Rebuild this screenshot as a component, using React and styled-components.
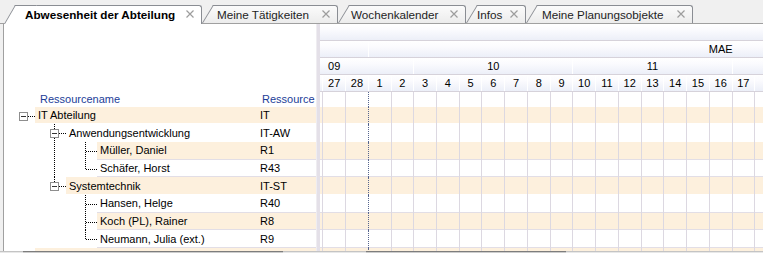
import React from 'react';
import styled, { createGlobalStyle } from 'styled-components';

const ROW_H = 17.667;
const COL = 22.737;

const Global = createGlobalStyle`
  html, body { margin: 0; padding: 0; background: #f0f0f0; }
  body {
    font-family: "Liberation Sans", Arial, sans-serif;
    font-size: 11px;
    color: #000;
    overflow: hidden;
  }
`;

const Window = styled.div`
  width: 763px;
  height: 253px;
  display: flex;
  flex-direction: column;
  background: #f0f0f0;
  overflow: hidden;
`;

/* ---------- Tabs ---------- */
const TabBar = styled.div`
  flex: 0 0 24px;
  box-sizing: border-box;
  display: flex;
  align-items: flex-end;
  padding-left: 4px;
  border-bottom: 1px solid #a0a0a0;
`;

const Tab = styled.div`
  position: relative;
  z-index: ${(p) => p.$z};
  flex: 0 0 auto;
  box-sizing: border-box;
  width: ${(p) => p.$w}px;
  height: ${(p) => (p.$active ? 19 : 18)}px;
  margin-left: 11px;
  margin-bottom: ${(p) => (p.$active ? -1 : 0)}px;
  display: flex;
  align-items: center;
  padding-bottom: ${(p) => (p.$active ? 2 : 1)}px;
  border-top: 1px solid #8a8d93;
  border-right: 1px solid #8a8d93;
  border-top-right-radius: 3px;
  background: ${(p) => (p.$active ? '#ffffff' : 'linear-gradient(#fbfbfb, #ececec)')};

  &::before {
    content: '';
    position: absolute;
    z-index: -1;
    top: -1px;
    bottom: 0;
    left: -11px;
    width: 22px;
    box-sizing: border-box;
    border-left: 1px solid #8a8d93;
    border-top: 1px solid #8a8d93;
    background: inherit;
    transform-origin: bottom left;
    transform: skewX(${(p) => (p.$active ? -30.1 : -31.4)}deg);
  }
`;

const TabLabel = styled.span`
  flex: 1 1 auto;
  padding-left: ${(p) => p.$pl}px;
  font-size: 11.7px;
  font-weight: ${(p) => (p.$active ? 700 : 400)};
  color: ${(p) => (p.$active ? '#000' : '#1e1e1e')};
  white-space: nowrap;
`;

const CloseIcon = styled.svg`
  flex: 0 0 auto;
  width: 8px;
  height: 8px;
  margin-right: 7px;
`;

function Close() {
  return (
    <CloseIcon viewBox="0 0 8 8">
      <path d="M0.5 0.5 L7.5 7.5 M7.5 0.5 L0.5 7.5" stroke="#9d9d9d" strokeWidth="1.2" />
    </CloseIcon>
  );
}

const tabs = [
  { label: 'Abwesenheit der Abteilung', w: 187, pl: 10, active: true },
  { label: 'Meine Tätigkeiten', w: 125, pl: 4 },
  { label: 'Wochenkalender', w: 117, pl: 2 },
  { label: 'Infos', w: 49, pl: 0 },
  { label: 'Meine Planungsobjekte', w: 156, pl: 5 },
];

/* ---------- Body ---------- */
const Body = styled.div`
  flex: 0 0 227px;
  display: flex;
  overflow: hidden;
`;

const OuterEdge = styled.div`
  flex: 0 0 3px;
  background: #f0f0f0;
`;

const LeftPanel = styled.div`
  flex: 0 0 313px;
  box-sizing: border-box;
  border-left: 1px solid #a0a0a0;
  background: #fff;
  display: flex;
  flex-direction: column;
`;

const HeaderSpace = styled.div`
  flex: 0 0 68px;
`;

const ColumnHeader = styled.div`
  flex: 0 0 14.667px;
  display: flex;
  align-items: center;
  padding-left: 36px;
  color: #1c3d98;
`;

const ColName = styled.span`
  flex: 1 1 auto;
`;

const ColCode = styled.span`
  flex: 0 0 58px;
  box-sizing: border-box;
  padding-left: 4px;
`;

const TreeRow = styled.div`
  flex: 0 0 ${ROW_H}px;
  display: flex;
`;

const Band = styled.div`
  flex: 1 1 auto;
  display: flex;
  align-items: center;
  padding-bottom: 1px;
  box-sizing: border-box;
  background: linear-gradient(
    to bottom,
    ${(p) => (p.$alt ? '#fdf0dd' : '#ffffff')} calc(100% - 1px),
    ${(p) => (p.$line ? '#e2dee6' : '#ffffff')} calc(100% - 1px)
  );
`;

const NameCell = styled.span`
  flex: 1 1 auto;
  padding-left: 3px;
  white-space: nowrap;
`;

const CodeCell = styled.span`
  flex: 0 0 58px;
  box-sizing: border-box;
  padding-left: 2px;
`;

const Glyph = styled.svg`
  flex: 0 0 31px;
  width: 31px;
  height: ${ROW_H}px;
  display: block;
`;

function TreeGlyph({ kind, box }) {
  const H = ROW_H;
  const y = 9.5;
  const dot = { stroke: '#000', strokeWidth: 1, strokeDasharray: '1 1' };
  return (
    <Glyph shapeRendering="crispEdges">
      {(kind === 'pipe' || kind === 'tee') && (
        <line x1="19.5" y1="0" x2="19.5" y2={H} {...dot} />
      )}
      {kind === 'elbow' && <line x1="19.5" y1="0" x2="19.5" y2={y} {...dot} />}
      {kind !== 'pipe' && kind !== 'none' && (
        <line x1={box ? 24 : 20} y1={y} x2="31" y2={y} {...dot} />
      )}
      {box && (
        <g>
          <rect x="15.5" y="5.5" width="8" height="8" fill="#fff" stroke="#8e8e8e" />
          <line x1="17" y1={y} x2="22" y2={y} stroke="#333" />
        </g>
      )}
    </Glyph>
  );
}

const rows = [
  { name: 'IT Abteilung', code: 'IT', glyphs: [['root', true]] },
  { name: 'Anwendungsentwicklung', code: 'IT-AW', glyphs: [['none'], ['tee', true]] },
  { name: 'Müller, Daniel', code: 'R1', glyphs: [['none'], ['pipe'], ['tee']], line: true },
  { name: 'Schäfer, Horst', code: 'R43', glyphs: [['none'], ['pipe'], ['elbow']], line: true },
  { name: 'Systemtechnik', code: 'IT-ST', glyphs: [['none'], ['elbow', true]] },
  { name: 'Hansen, Helge', code: 'R40', glyphs: [['none'], ['none'], ['tee']], line: true },
  { name: 'Koch (PL), Rainer', code: 'R8', glyphs: [['none'], ['none'], ['tee']], line: true },
  { name: 'Neumann, Julia (ext.)', code: 'R9', glyphs: [['none'], ['none'], ['elbow']], line: true },
  { name: '', code: '', glyphs: [['none']] },
];

const Splitter = styled.div`
  flex: 0 0 4px;
  background: #e4e0e8;
  border-left: 1px solid #efedf1;
  box-sizing: border-box;
`;

/* ---------- Chart ---------- */
const Chart = styled.div`
  flex: 1 1 auto;
  overflow: hidden;
  background: #fff;
`;

const Track = styled.div`
  width: ${(p) => p.$days * COL}px;
  margin-left: -64.91px;
  display: flex;
  flex-direction: column;
`;

const HeaderRow = styled.div`
  flex: 0 0 17px;
  box-sizing: border-box;
  display: flex;
  border-bottom: 1px solid #d6d2da;
`;

const HeaderCell = styled.div`
  flex: 0 0 ${(p) => p.$span * COL}px;
  box-sizing: border-box;
  text-align: center;
  line-height: 16px;
  border-right: 1px solid ${(p) => (p.$plain ? 'transparent' : '#ffffff')};
  background: linear-gradient(to bottom, #ffffff 0%, #fbfbfe 35%, #eceff8 100%);
  white-space: nowrap;
  overflow: hidden;
`;

const GridRow = styled.div`
  flex: 0 0 ${(p) => p.$h}px;
  display: flex;
  background: linear-gradient(
    to bottom,
    ${(p) => (p.$alt ? '#fdf0dd' : '#ffffff')} calc(100% - 1px),
    ${(p) => (p.$line ? '#e2dee6' : '#ffffff')} calc(100% - 1px)
  );
`;

const DayCell = styled.div`
  flex: 0 0 ${COL}px;
  box-sizing: border-box;
  border-right: 1px ${(p) => (p.$today ? 'dotted #56658e' : 'solid #dcd8e1')};
`;

/* days scrolled out of view carry no label */
const days = [
  { d: '' }, { d: '' }, { d: '' }, { d: 27 }, { d: 28, today: true },
  ...Array.from({ length: 20 }, (_, i) => ({ d: i < 17 ? i + 1 : '' })),
];

const months = [
  { label: '', span: 5 },
  { label: 'MAE', span: 31 },
];

const weeks = [
  { label: '09', span: 7 },
  { label: '10', span: 7 },
  { label: '11', span: 7 },
  { label: '', span: 7 },
];

/* ---------- Scroll strip ---------- */
const ScrollStrip = styled.div`
  flex: 0 0 17px;
  display: flex;
  box-sizing: border-box;
  border-top: 1px solid #c4c4c4;
  background: #e8e8e8;
`;

const ScrollTrack = styled.div`
  flex: 0 0 ${(p) => p.$w}px;
  display: flex;
  padding-left: ${(p) => p.$thumbAt}px;
  box-sizing: border-box;
`;

const Thumb = styled.div`
  flex: 0 0 ${(p) => p.$w}px;
  margin-top: -1px;
  border-top: 1px solid #7d7d7d;
  background: #cdcdcd;
`;

function GridCells() {
  return days.map((d, i) => <DayCell key={i} $today={d.today} />);
}

export default function App() {
  return (
    <>
      <Global />
      <Window>
        <TabBar>
          {tabs.map((t, i) => (
            <Tab key={t.label} $w={t.w} $active={t.active} $z={t.active ? 20 : 10 - i}>
              <TabLabel $active={t.active} $pl={t.pl}>{t.label}</TabLabel>
              <Close />
            </Tab>
          ))}
        </TabBar>

        <Body>
          <OuterEdge />
          <LeftPanel>
            <HeaderSpace />
            <ColumnHeader>
              <ColName>Ressourcename</ColName>
              <ColCode>Ressource</ColCode>
            </ColumnHeader>
            {rows.map((r, i) => (
              <TreeRow key={i}>
                {r.glyphs.map(([kind, box], j) => (
                  <TreeGlyph key={j} kind={kind} box={box} />
                ))}
                <Band $alt={i % 2 === 0} $line={r.line}>
                  <NameCell>{r.name}</NameCell>
                  <CodeCell>{r.code}</CodeCell>
                </Band>
              </TreeRow>
            ))}
          </LeftPanel>
          <Splitter />
          <Chart>
            <Track $days={days.length}>
              <HeaderRow>
                <HeaderCell $span={40} $plain />
              </HeaderRow>
              <HeaderRow>
                {months.map((m, i) => (
                  <HeaderCell key={i} $span={m.span}>{m.label}</HeaderCell>
                ))}
              </HeaderRow>
              <HeaderRow>
                {weeks.map((w, i) => (
                  <HeaderCell key={i} $span={w.span}>{w.label}</HeaderCell>
                ))}
              </HeaderRow>
              <HeaderRow>
                {days.map((d, i) => (
                  <HeaderCell key={i} $span={1}>{d.d}</HeaderCell>
                ))}
              </HeaderRow>
              <GridRow $h={14.667}>
                <GridCells />
              </GridRow>
              {rows.map((r, i) => (
                <GridRow key={i} $h={ROW_H} $alt={i % 2 === 0} $line={r.line}>
                  <GridCells />
                </GridRow>
              ))}
            </Track>
          </Chart>
        </Body>

        <ScrollStrip>
          <ScrollTrack $w={316} $thumbAt={23}>
            <Thumb $w={260} />
          </ScrollTrack>
          <ScrollTrack $w={447} $thumbAt={50}>
            <Thumb $w={200} />
          </ScrollTrack>
        </ScrollStrip>
      </Window>
    </>
  );
}
